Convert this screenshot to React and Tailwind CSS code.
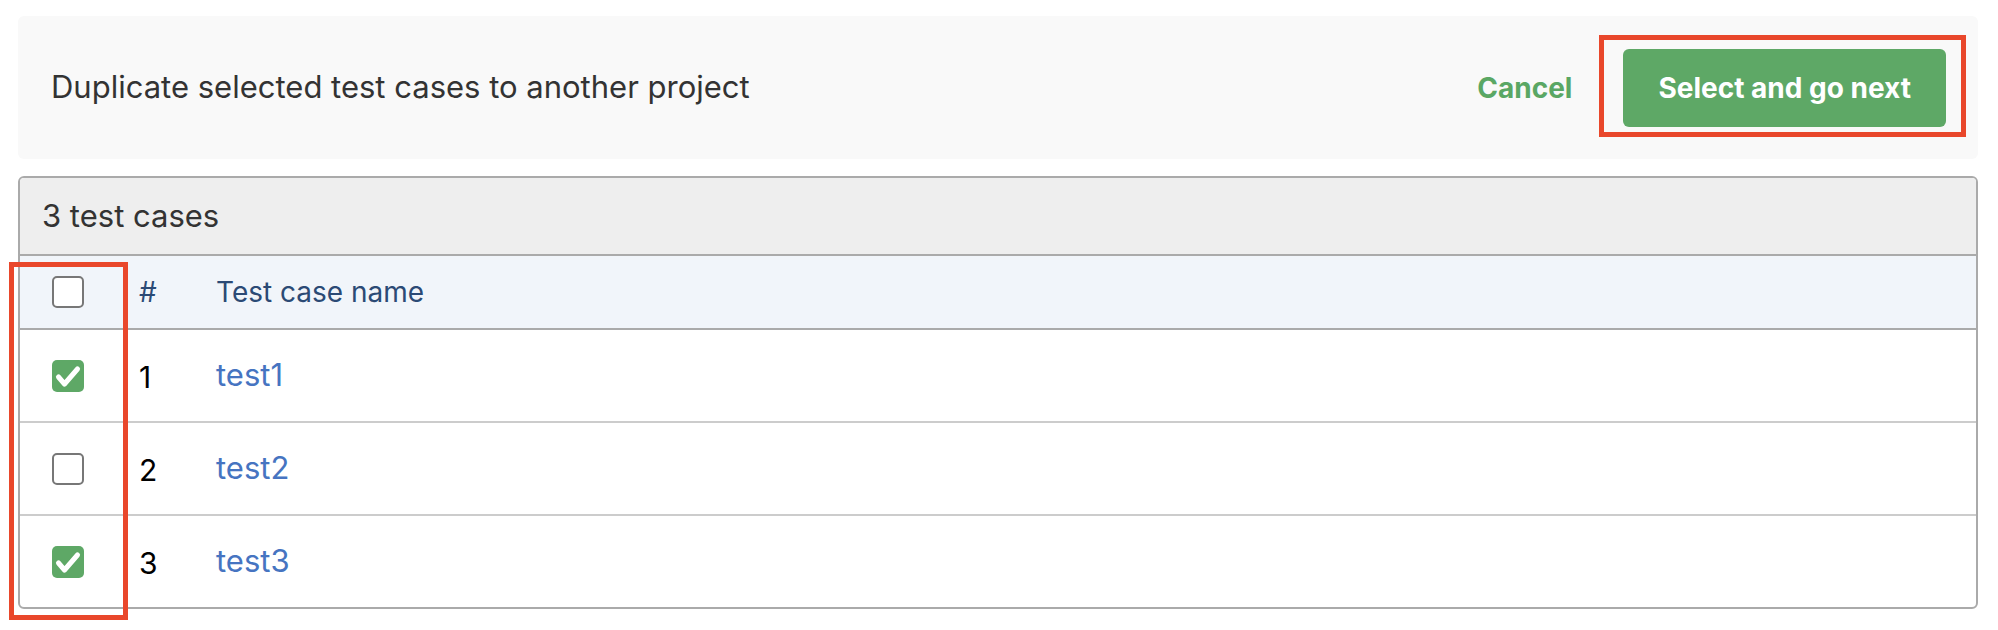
import { useState } from "react";

const CASES = [
  { id: 1, name: "test1", checked: true },
  { id: 2, name: "test2", checked: false },
  { id: 3, name: "test3", checked: true },
];

function Checkbox({ checked, onChange }) {
  return (
    <button
      type="button"
      onClick={onChange}
      className={
        checked
          ? "w-[32px] h-[32px] rounded-[5px] bg-[#5ea866] flex items-center justify-center"
          : "w-[32px] h-[32px] rounded-[5px] border-2 border-[#777777] bg-white"
      }
      aria-pressed={checked}
    >
      {checked ? (
        <svg viewBox="0 0 32 32" className="w-[32px] h-[32px]">
          <path d="M6.5 17 L12.5 24 L25.5 9" fill="none" stroke="white" strokeWidth="5" strokeLinecap="round" strokeLinejoin="round" />
        </svg>
      ) : null}
    </button>
  );
}

export default function App() {
  const [cases, setCases] = useState(CASES);
  const allChecked = cases.every((c) => c.checked);

  const toggle = (id) =>
    setCases((prev) => prev.map((c) => (c.id === id ? { ...c, checked: !c.checked } : c)));

  return (
    <div className="min-h-screen bg-white pt-4 pl-[18px] pr-5 font-['Inter',sans-serif]">
      <div className="flex items-center justify-between h-[143px] rounded-md bg-[#f9f9f9] pl-[33px] pr-[32px]">
        <span className="text-[31px] text-[#333333]">Duplicate selected test cases to another project</span>
        <div className="flex items-center gap-[51px]">
          <button type="button" className="text-[28px] font-bold text-[#5aa764]">
            Cancel
          </button>
          <div className="relative">
            <button
              type="button"
              className="h-[78px] px-[35px] rounded-[6px] bg-[#5ea866] text-white font-bold text-[28px]"
            >
              Select and go next
            </button>
            <div className="absolute left-[-24px] right-[-20px] top-[-14px] bottom-[-10px] border-[5px] border-[#e9472b] pointer-events-none" />
          </div>
        </div>
      </div>

      <div className="relative mt-[17px]">
        <div className="border-2 border-[#aaaaaa] rounded-md overflow-hidden">
          <div className="h-[78px] bg-[#eeeeee] border-b-2 border-[#aaaaaa] flex items-center pl-[22px] text-[31px] text-[#333333]">
            3 test cases
          </div>
          <div className="h-[74px] bg-[#f1f5fa] border-b-2 border-[#aaaaaa] flex items-center text-[28px] text-[#2b4a75]">
            <div className="w-[119px] pl-[32px] flex items-center">
              <Checkbox
                checked={allChecked}
                onChange={() => setCases((prev) => prev.map((c) => ({ ...c, checked: !allChecked })))}
              />
            </div>
            <div className="w-[77px]">#</div>
            <div className="flex-1">Test case name</div>
          </div>
          {cases.map((c, i) => (
            <div
              key={c.id}
              className={
                i < cases.length - 1
                  ? "h-[93px] border-b-2 border-[#cccccc] flex items-center"
                  : "h-[91px] flex items-center"
              }
            >
              <div className="w-[119px] pl-[32px] flex items-center">
                <Checkbox checked={c.checked} onChange={() => toggle(c.id)} />
              </div>
              <div className="w-[77px] text-[30px] text-black pt-[4px]">{c.id}</div>
              <a href="#" className="flex-1 text-[31px] text-[#4674c1]">
                {c.name}
              </a>
            </div>
          ))}
        </div>
        <div className="absolute left-[-9px] top-[86px] w-[119px] h-[358px] border-[5px] border-[#e9472b] pointer-events-none" />
      </div>
    </div>
  );
}
